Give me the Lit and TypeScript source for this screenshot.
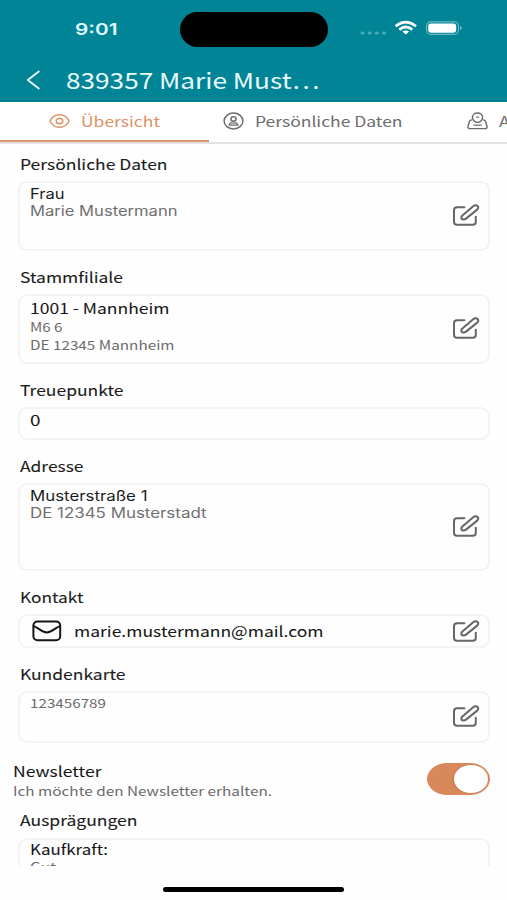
import { LitElement, html, css, svg, nothing } from "lit";
import { customElement, property } from "lit/decorators.js";

/** A single line of text, stretched horizontally to a given width. */
@customElement("wide-text")
class WideText extends LitElement {
  @property({ type: Number }) width = 0;
  static styles = css`
    :host { display: block; flex: none; white-space: nowrap; }
    .line { display: inline-block; transform-origin: 0 50%; vertical-align: top; }
  `;
  render() {
    return html`<span class="line"><slot></slot></span>`;
  }
  firstUpdated() {
    const line = this.renderRoot.querySelector<HTMLElement>(".line")!;
    const natural = line.getBoundingClientRect().width;
    this.style.width = `${this.width}px`;
    if (natural > 0) line.style.transform = `scaleX(${this.width / natural})`;
  }
}

type Line = { text: string; width: number; kind: string };
type Section = { title: string; titleWidth: number; box: string; lines: Line[]; edit?: boolean; mail?: boolean };

const sections: Section[] = [
  { title: "Persönliche Daten", titleWidth: 147.5, box: "person", edit: true, lines: [
    { text: "Frau", width: 34.5, kind: "sys dark" },
    { text: "Marie Mustermann", width: 147.5, kind: "sys" },
  ] },
  { title: "Stammfiliale", titleWidth: 103, box: "branch", edit: true, lines: [
    { text: "1001 - Mannheim", width: 139.5, kind: "main" },
    { text: "M6 6", width: 32.5, kind: "small gap" },
    { text: "DE 12345 Mannheim", width: 144.5, kind: "small" },
  ] },
  { title: "Treuepunkte", titleWidth: 103.5, box: "points", lines: [{ text: "0", width: 10.5, kind: "main" }] },
  { title: "Adresse", titleWidth: 63.5, box: "address", edit: true, lines: [
    { text: "Musterstraße 1", width: 117.5, kind: "sys dark" },
    { text: "DE 12345 Musterstadt", width: 176.5, kind: "sys" },
  ] },
  { title: "Kontakt", titleWidth: 63.5, box: "contact", edit: true, mail: true, lines: [
    { text: "marie.mustermann@mail.com", width: 249.5, kind: "main" },
  ] },
  { title: "Kundenkarte", titleWidth: 105.5, box: "card", edit: true, lines: [
    { text: "123456789", width: 76, kind: "small" },
  ] },
];

const editIcon = html`<svg class="edit" width="28" height="24" viewBox="0 0 28 24">
  ${svg`<path d="M12.4 4.2H5Q2 4.2 2 7.2V18.8Q2 21.8 5 21.8H20.8Q23.8 21.8 23.8 18.8V13.8"/>
  <path d="M9.4 15.2C9.2 14.2 9.6 13.3 10.4 12.6L21.2 3.2C22.6 2 24.7 1.9 25.7 3.1C26.6 4.3 26.2 5.8 24.9 6.9L14 15.6C13.2 16.2 12.3 16.5 11.3 16.5C10 16.6 9.5 16.3 9.4 15.2Z"/>`}
</svg>`;

const mailIcon = html`<svg class="mail" width="30" height="22" viewBox="0 0 30 22">
  ${svg`<rect x="1.4" y="1.5" width="26.8" height="18.8" rx="4"/>
  <path d="M1.8 6.1C5.5 7.4 10 12.4 14.8 12.4S24.1 7.4 27.8 6.1"/>`}
</svg>`;

@customElement("app-root")
class AppRoot extends LitElement {
  static styles = css`
    :host {
      display: flex; flex-direction: column; width: 507px; height: 900px; overflow: hidden;
      background: #fefefe; font-family: "Noto Sans CJK SC", "Noto Sans", sans-serif; color: #222;
    }
    svg { display: block; flex: none; fill: none; stroke: currentColor; stroke-linecap: round; stroke-linejoin: round; }
    .header { flex: none; height: 102px; background: #008496; color: #e9fbfd; display: flex; flex-direction: column; }
    .status { height: 59px; display: flex; align-items: center; box-sizing: border-box; padding-left: 74.5px; }
    .time { font: 600 16.5px/20px Inter, sans-serif; color: #dff8fb; margin-bottom: 1px; }
    .island { width: 148px; height: 35px; border-radius: 18px; background: #000; margin-left: 62.5px; }
    .signals { margin-left: 31px; margin-bottom: 1px; color: #fff; }
    .bar { display: flex; align-items: center; padding-left: 26px; height: 43px; }
    .bar svg { margin-bottom: 2px; }
    .title { font-size: 22px; line-height: 32px; margin: 0 0 4px 24.5px; }
    .tabs { flex: none; height: 42px; box-sizing: border-box; display: flex; overflow: hidden; border-bottom: 2px solid #e2e2e2; color: #6c6c6c; background: #fff; }
    .tab { display: flex; flex: none; align-items: center; height: 38px; font-size: 14.3px; line-height: 20px; box-sizing: border-box; }
    .overview { width: 209px; height: 41px; padding-left: 49px; gap: 11px; color: #de8f66; border-bottom: 3px solid #dc936f; }
    .personal { width: 258px; padding-left: 14px; gap: 11px; }
    .addresses { gap: 11px; }
    .content { flex: none; height: 722px; overflow: hidden; padding: 0 17px 0 18px; box-sizing: border-box; }
    .heading { height: 43px; box-sizing: border-box; padding: 17px 0 0 2px; font-size: 14.5px; line-height: 18px; font-weight: 400; -webkit-text-stroke: 0.1px; color: #1c1c1c; }
    .heading.first { height: 37px; padding-top: 11px; }
    .box { box-sizing: border-box; border: 2px solid #f3f3f3; border-radius: 9px; display: flex; padding: 2px 8px 0 10px; }
    .lines { flex: 1; min-width: 0; }
    .person { height: 70px; padding-top: 3px; }
    .branch { height: 70px; padding-top: 3px; }
    .points { height: 33px; }
    .address { height: 88px; padding-top: 3px; }
    .contact { height: 34px; padding-top: 0; align-items: center; }
    .card { height: 52px; padding-top: 1px; }
    .traits { height: 70px; padding-top: 0; }
    .main { font-size: 14.5px; line-height: 18px; color: #161616; -webkit-text-stroke: 0.05px; }
    .small { font-size: 12.6px; line-height: 18px; color: #6b6b6b; }
    .gap { margin-top: 0.8px; }
    .sys { font: 400 13.8px/17.2px Inter, sans-serif; color: #707070; }
    .dark { color: #1c1c1c; }
    .edit { align-self: center; color: #666; stroke-width: 2; margin-top: -4px; }
    .person .edit, .branch .edit, .address .edit { margin-top: -5px; }
    .contact .edit { margin-top: -1px; }
    .mail { color: #161616; stroke-width: 2; margin: 0 12px 0 2px; }
    .newsletter { height: 58px; box-sizing: border-box; display: flex; justify-content: space-between; padding-top: 18px; margin-left: -5px; }
    .newsletter .main { margin-top: 1px; }
    .newsletter .small { margin-top: 2px; }
    .toggle { margin-top: 2px; width: 63px; height: 32px; border-radius: 20px / 16px; background: #d9885b; box-sizing: border-box; padding: 2px; display: flex; justify-content: flex-end; }
    .knob { width: 34px; height: 28px; border-radius: 50%; background: #fff; box-shadow: -1px 0 2px #a75d3566; }
    .heading.last { height: 37px; padding-top: 10px; }
    .home { flex: none; display: flex; justify-content: center; padding-top: 21px; }
    .indicator { width: 181px; height: 5px; border-radius: 3px; background: #000; }
  `;

  private line(l: Line) {
    return html`<wide-text class=${l.kind} .width=${l.width}>${l.text}</wide-text>`;
  }

  render() {
    return html`
      <div class="header">
        <div class="status">
          <wide-text class="time" .width=${42.5}>9:01</wide-text>
          <div class="island"></div>
          <svg class="signals" width="106" height="20" viewBox="0 0 106 20">
            ${svg`<g fill="#4aa9b6" stroke="none">
              <rect x="1.5" y="12.5" width="4" height="3" rx="1.5"/><rect x="8.7" y="12.5" width="4" height="3" rx="1.5"/>
              <rect x="15.9" y="12.5" width="4" height="3" rx="1.5"/><rect x="23.1" y="12.5" width="4" height="3" rx="1.5"/></g>
              <g stroke-width="2.7" stroke-linecap="butt"><path d="M36.6 7.2Q46.8 -.8 57 7.2"/><path d="M40.3 10.6Q46.8 5.4 53.3 10.6"/></g>
              <path d="M43.4 12.6Q46.8 10.5 50.2 12.6L46.8 15.6Z" fill="#fff" stroke="none"/>
              <rect x="67.5" y="2.9" width="32" height="12.4" rx="4.2" stroke="#69b8c3" stroke-width="1.2"/>
              <rect x="69.2" y="4.5" width="28" height="9.2" rx="3" fill="#fff" stroke="none"/>
              <path d="M101 7.2Q103 7.8 103 9Q103 10.4 101 11Z" fill="#69b8c3" stroke="none"/>`}
          </svg>
        </div>
        <div class="bar">
          <svg width="15" height="22" viewBox="0 0 15 22" stroke-width="1.8">${svg`<path d="M12.8 2.5L1.8 11L12.8 19.5"/>`}</svg>
          <wide-text class="title" .width=${253.5}>839357 Marie Must…</wide-text>
        </div>
      </div>
      <div class="tabs">
        <div class="tab overview">
          <svg width="21" height="16" viewBox="0 0 21 16" stroke-width="1.4">${svg`
            <path d="M1 8C3 3.8 6.5 1.7 10.5 1.7S18 3.8 20 8C18 12.2 14.5 14.3 10.5 14.3S3 12.2 1 8Z"/><ellipse cx="10.5" cy="8" rx="3.3" ry="2.8"/>`}</svg>
          <wide-text .width=${79}>Übersicht</wide-text>
        </div>
        <div class="tab personal">
          <svg width="21" height="18" viewBox="0 0 21 18" stroke-width="1.5">${svg`
            <ellipse cx="10.5" cy="9" rx="9.4" ry="7.9"/><ellipse cx="10.5" cy="7" rx="2.6" ry="2.2"/>
            <path d="M6.1 13.2C6.3 11.4 7.6 10.7 8.8 10.8Q10.5 11.4 12.2 10.8C13.4 10.7 14.7 11.4 14.9 13.2Z" stroke-width="1.2"/>`}</svg>
          <wide-text .width=${147.5}>Persönliche Daten</wide-text>
        </div>
        <div class="tab addresses">
          <svg width="21" height="18" viewBox="0 0 21 18" stroke-width="1.4">${svg`
            <path d="M4.4 8Q3 8 2.5 9.3L1 14.2Q.5 16.6 3 16.6H18Q20.5 16.6 20 14.2L18.5 9.3Q18 8 16.6 8"/>
            <path d="M8.6 10C6.6 9 5.4 7.3 5.4 5.3C5.4 2.8 7.7 1 10.5 1S15.6 2.8 15.6 5.3C15.6 7.3 14.4 9 12.4 10Q10.5 10.8 8.6 10Z"/>
            <path d="M9.7 5.1H11.3M6.8 13.1H14.2"/>`}</svg>
          <wide-text .width=${65}>Adresse</wide-text>
        </div>
      </div>
      <div class="content">
        ${sections.map((s, i) => html`
          <div class="heading ${i === 0 ? "first" : ""}"><wide-text .width=${s.titleWidth}>${s.title}</wide-text></div>
          <div class="box ${s.box}">
            ${s.mail ? mailIcon : nothing}
            <div class="lines">${s.lines.map((l) => this.line(l))}</div>
            ${s.edit ? editIcon : nothing}
          </div>`)}
        <div class="newsletter">
          <div>
            ${this.line({ text: "Newsletter", width: 88.5, kind: "main" })}
            ${this.line({ text: "Ich möchte den Newsletter erhalten.", width: 259, kind: "small" })}
          </div>
          <div class="toggle"><div class="knob"></div></div>
        </div>
        <div class="heading last"><wide-text .width=${117.5}>Ausprägungen</wide-text></div>
        <div class="box traits">
          <div class="lines">
            ${this.line({ text: "Kaufkraft:", width: 78, kind: "main" })}
            ${this.line({ text: "Gut", width: 26, kind: "small" })}
          </div>
        </div>
      </div>
      <div class="home"><div class="indicator"></div></div>
    `;
  }
}
